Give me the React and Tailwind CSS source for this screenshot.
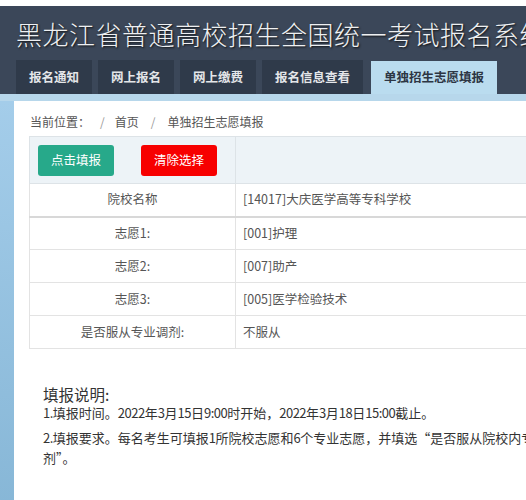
import React from "react";

const tabs = ["报名通知", "网上报名", "网上缴费", "报名信息查看"];
const rows = [
  ["院校名称", "[14017]大庆医学高等专科学校"],
  ["志愿1:", "[001]护理"],
  ["志愿2:", "[007]助产"],
  ["志愿3:", "[005]医学检验技术"],
  ["是否服从专业调剂:", "不服从"],
];

function N({ children }) {
  return <span className="tracking-[-0.5px]">{children}</span>;
}

export default function App() {
  return (
    <div
      className="w-[526px] h-[500px] overflow-hidden bg-white"
      style={{ fontFamily: '"Noto Sans CJK SC", "Noto Sans", sans-serif' }}
    >
      <div className="w-[600px]">
        <div className="h-[6px] bg-white" />
        <header className="bg-[#3b4759] pl-[16px] pt-[12px]">
          <h1 className="text-[26px] leading-[32px] tracking-[0.5px] font-light text-[#eef0f2] [text-shadow:1px_1px_2px_#111] whitespace-nowrap">
            黑龙江省普通高校招生全国统一考试报名系统
          </h1>
          <nav className="flex items-end gap-[6px] mt-[10px]">
            {tabs.map((t) => (
              <div
                key={t}
                className="h-[34px] px-[13px] flex items-center bg-[#2f3a4a] text-[12.5px] font-bold text-[#e4e6e9] whitespace-nowrap"
              >
                {t}
              </div>
            ))}
            <div className="h-[33px] ml-[2px] px-[13px] flex items-center bg-[#badcef] text-[12.5px] font-bold text-[#2d3644] whitespace-nowrap">
              单独招生志愿填报
            </div>
          </nav>
        </header>
        <div className="h-[7px] bg-[#b7d7eb]" />
        <div className="bg-gradient-to-b from-[#a4cdea] to-[#86b6d6] pl-[14px] h-[420px]">
          <main className="bg-white h-full pl-[15px] pt-[11px]">
            <div className="text-[12px] leading-[20px] text-[#555] pl-[1px] whitespace-nowrap">
              当前位置：<span className="mx-[10px] text-[#999]">/</span>首页
              <span className="mx-[12px] text-[#999]">/</span>单独招生志愿填报
            </div>
            <table className="mt-[4px] border-collapse w-[560px] text-[12.5px] text-[#555]">
              <tbody>
                <tr className="bg-[#edf3f7] h-[47px]">
                  <td className="border border-[#dde3e7] w-[206px] pl-[8px]">
                    <div className="flex gap-[27px]">
                      <button className="w-[76px] h-[31px] rounded-[3px] bg-[#27a98a] text-white text-[12.5px]">
                        点击填报
                      </button>
                      <button className="w-[76px] h-[31px] rounded-[3px] bg-[#f70000] text-white text-[12.5px]">
                        清除选择
                      </button>
                    </div>
                  </td>
                  <td className="border border-[#dde3e7]" />
                </tr>
                {rows.map(([k, v], i) => (
                  <tr key={k} className="h-[33px] bg-white">
                    <td
                      className={`border border-[#e3e3e3] text-center ${
                        i === 0 ? "border-b-2 border-b-[#d8d8d8]" : ""
                      }`}
                    >
                      {k}
                    </td>
                    <td
                      className={`border border-[#e3e3e3] pl-[7px] ${
                        i === 0 ? "border-b-2 border-b-[#d8d8d8]" : ""
                      }`}
                    >
                      {v}
                    </td>
                  </tr>
                ))}
              </tbody>
            </table>
            <div className="pl-[14px] pt-[36px] w-[543px] text-[#333]">
              <div className="text-[15.5px] leading-[18px]">填报说明:</div>
              <p className="text-[13px] leading-[20px] mt-[0px]">
                <N>1.</N>填报时间。<N>2022</N>年<N>3</N>月<N>15</N>日<N>9:00</N>时开始，<N>2022</N>年<N>3</N>月<N>18</N>日<N>15:00</N>截止。
              </p>
              <p className="text-[13px] leading-[20px] mt-[5px]">
                <N>2.</N>填报要求。每名考生可填报<N>1</N>所院校志愿和<N>6</N>个专业志愿，并填选“是否服从院校内专业调剂”。
              </p>
            </div>
          </main>
        </div>
      </div>
    </div>
  );
}
